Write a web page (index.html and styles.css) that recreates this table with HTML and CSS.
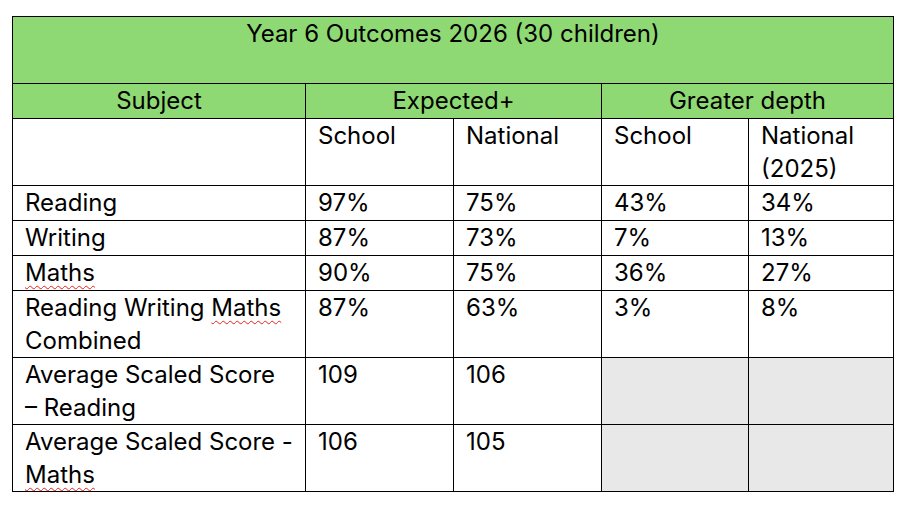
FILE: index.html
```html
<!DOCTYPE html>
<html lang="en">
<head>
<meta charset="utf-8">
<title>Year 6 Outcomes 2026</title>
<link rel="stylesheet" href="styles.css">
</head>
<body>
<table class="outcomes">
  <colgroup>
    <col class="c-subject">
    <col class="c-exp">
    <col class="c-exp">
    <col class="c-gd">
    <col class="c-gd2">
  </colgroup>
  <tr class="head title-row">
    <td colspan="5" class="center">Year 6 Outcomes 2026 (30 children)<br>&nbsp;</td>
  </tr>
  <tr class="head single">
    <td class="center">Subject</td>
    <td colspan="2" class="center">Expected+</td>
    <td colspan="2" class="center">Greater depth</td>
  </tr>
  <tr>
    <td></td>
    <td>School<br>&nbsp;</td>
    <td>National</td>
    <td>School</td>
    <td>National<br>(2025)</td>
  </tr>
  <tr class="single">
    <td>Reading</td><td>97%</td><td>75%</td><td>43%</td><td>34%</td>
  </tr>
  <tr class="single">
    <td>Writing</td><td>87%</td><td>73%</td><td>7%</td><td>13%</td>
  </tr>
  <tr class="single">
    <td><span class="spell">Maths</span></td><td>90%</td><td>75%</td><td>36%</td><td>27%</td>
  </tr>
  <tr>
    <td>Reading Writing <span class="spell">Maths</span><br>Combined</td><td>87%</td><td>63%</td><td>3%</td><td>8%</td>
  </tr>
  <tr>
    <td>Average Scaled Score<br>– Reading</td><td>109</td><td>106</td><td class="shade"></td><td class="shade"></td>
  </tr>
  <tr>
    <td>Average Scaled Score -<br><span class="spell">Maths</span></td><td>106</td><td>105</td><td class="shade"></td><td class="shade"></td>
  </tr>
</table>
</body>
</html>
```

FILE: styles.css
```css
html, body {
  margin: 0;
  padding: 0;
  background: #ffffff;
}

body {
  padding: 16px 0 0 12px;
  font-family: "Inter", "Liberation Sans", sans-serif;
  color: #000000;
}

.outcomes {
  border-collapse: collapse;
  table-layout: fixed;
  width: 881px;
  font-size: 24px;
  line-height: 33px;
}

.c-subject { width: 293px; }
.c-exp { width: 148px; }
.c-gd { width: 147px; }
.c-gd2 { width: 145px; }

.outcomes td {
  border: 1.5px solid #000000;
  padding: 0 4px 0 12px;
  vertical-align: top;
  white-space: nowrap;
  overflow: hidden;
  text-align: left;
}

.outcomes tr.single td {
  padding-bottom: 1px;
}

.outcomes tr.head td {
  background: #8ed973;
}

.outcomes td.center {
  text-align: center;
  padding-left: 4px;
}

.outcomes td.shade {
  background: #e8e8e8;
}

.spell {
  text-decoration: underline wavy #e8201c;
  text-decoration-thickness: 1px;
  text-underline-offset: 4px;
}
```
